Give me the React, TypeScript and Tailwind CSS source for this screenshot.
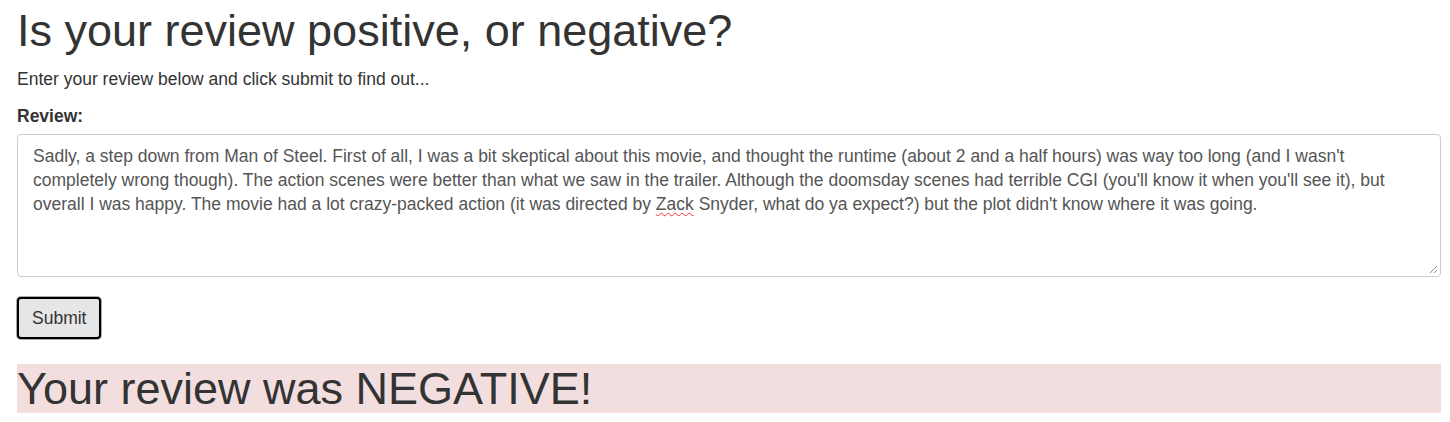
const review =
  "Sadly, a step down from Man of Steel. First of all, I was a bit skeptical about this movie, and thought the runtime (about 2 and a half hours) was way too long (and I wasn't completely wrong though). The action scenes were better than what we saw in the trailer. Although the doomsday scenes had terrible CGI (you'll know it when you'll see it), but overall I was happy. The movie had a lot crazy-packed action (it was directed by ";

export default function App() {
  return (
    <div className="min-h-[422px] bg-white pl-[17px] pr-[9px] font-['Liberation_Sans',Arial,sans-serif] text-[#333]">
      <h1 className="pt-[4px] text-[45px] leading-[54px]">
        Is your review positive, or negative?
      </h1>
      <p className="mt-[9px] text-[17.5px] leading-[24px]">
        Enter your review below and click submit to find out...
      </p>
      <label className="mt-[13px] block text-[17.5px] font-bold leading-[24px]">
        Review:
      </label>
      <div className="relative mt-[6px] h-[143px] rounded-[4px] border border-[#ccc] px-[15px] py-[9px] text-[17.5px] leading-[24px] text-[#555]">
        <p>
          {review}
          <span className="underline decoration-red-500 decoration-wavy decoration-1 underline-offset-2">
            Zack
          </span>{" "}
          Snyder, what do ya expect?) but the plot didn't know where it was going.
        </p>
        <svg
          className="absolute bottom-[2px] right-[2px]"
          width="10"
          height="10"
          viewBox="0 0 10 10"
        >
          <path d="M9 2 L2 9 M9 6 L6 9" stroke="#888" strokeWidth="1" />
        </svg>
      </div>
      <button
        type="button"
        className="mt-[20px] h-[42px] rounded-[4px] border-2 border-black bg-[#e6e6e6] px-[13px] text-[17.5px] text-[#333] shadow-[0_0_0_1px_#aaa]"
      >
        Submit
      </button>
      <div className="mt-[25px] bg-[#f2dede] text-[45px] leading-[49px]">
        Your review was NEGATIVE!
      </div>
    </div>
  );
}
